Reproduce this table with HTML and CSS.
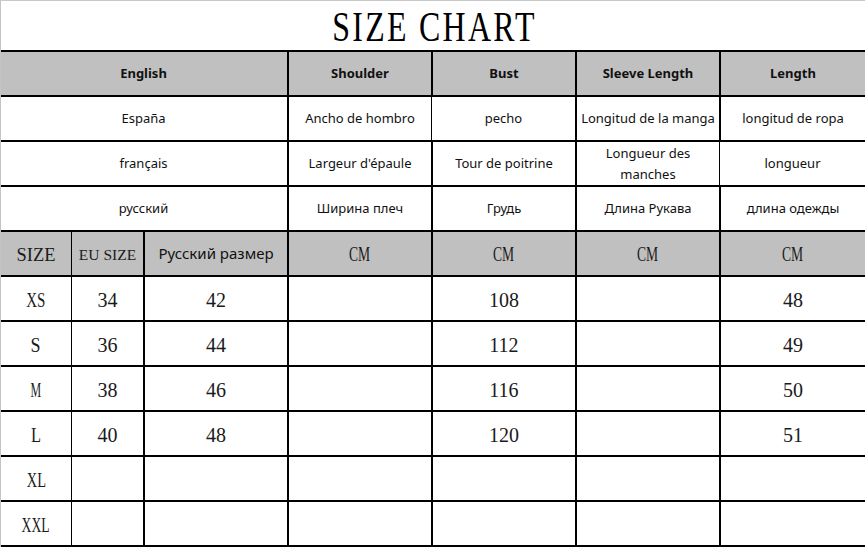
FILE: index.html
```html
<!DOCTYPE html>
<html>
<head>
<meta charset="utf-8">
<link rel="stylesheet" href="styles.css">
</head>
<body>
<div class="page">
  <div class="title"><span class="title-text">SIZE CHART</span></div>
  <div class="chart">
    <div class="cell head span3">English</div>
    <div class="cell head">Shoulder</div>
    <div class="cell head">Bust</div>
    <div class="cell head">Sleeve Length</div>
    <div class="cell head">Length</div>

    <div class="cell sans span3">España</div>
    <div class="cell sans">Ancho de hombro</div>
    <div class="cell sans">pecho</div>
    <div class="cell sans">Longitud de la manga</div>
    <div class="cell sans">longitud de ropa</div>

    <div class="cell sans span3">français</div>
    <div class="cell sans">Largeur d'épaule</div>
    <div class="cell sans">Tour de poitrine</div>
    <div class="cell sans">Longueur des<br>manches</div>
    <div class="cell sans">longueur</div>

    <div class="cell sans span3">русский</div>
    <div class="cell sans">Ширина плеч</div>
    <div class="cell sans">Грудь</div>
    <div class="cell sans">Длина Рукава</div>
    <div class="cell sans">длина одежды</div>

    <div class="cell gray serif"><span class="w-size">SIZE</span></div>
    <div class="cell gray serif small"><span class="w-eu">EU SIZE</span></div>
    <div class="cell gray sans big">Русский размер</div>
    <div class="cell gray serif"><span class="w-cm">CM</span></div>
    <div class="cell gray serif"><span class="w-cm">CM</span></div>
    <div class="cell gray serif"><span class="w-cm">CM</span></div>
    <div class="cell gray serif"><span class="w-cm">CM</span></div>

    <div class="cell serif"><span class="w-xs">XS</span></div>
    <div class="cell serif">34</div>
    <div class="cell serif">42</div>
    <div class="cell serif"></div>
    <div class="cell serif">108</div>
    <div class="cell serif"></div>
    <div class="cell serif">48</div>

    <div class="cell serif"><span class="w-s">S</span></div>
    <div class="cell serif">36</div>
    <div class="cell serif">44</div>
    <div class="cell serif"></div>
    <div class="cell serif">112</div>
    <div class="cell serif"></div>
    <div class="cell serif">49</div>

    <div class="cell serif"><span class="w-m">M</span></div>
    <div class="cell serif">38</div>
    <div class="cell serif">46</div>
    <div class="cell serif"></div>
    <div class="cell serif">116</div>
    <div class="cell serif"></div>
    <div class="cell serif">50</div>

    <div class="cell serif"><span class="w-l">L</span></div>
    <div class="cell serif">40</div>
    <div class="cell serif">48</div>
    <div class="cell serif"></div>
    <div class="cell serif">120</div>
    <div class="cell serif"></div>
    <div class="cell serif">51</div>

    <div class="cell serif"><span class="w-xl">XL</span></div>
    <div class="cell"></div>
    <div class="cell"></div>
    <div class="cell"></div>
    <div class="cell"></div>
    <div class="cell"></div>
    <div class="cell"></div>

    <div class="cell serif"><span class="w-xxl">XXL</span></div>
    <div class="cell"></div>
    <div class="cell"></div>
    <div class="cell"></div>
    <div class="cell"></div>
    <div class="cell"></div>
    <div class="cell"></div>
  </div>
</div>
</body>
</html>
```
FILE: styles.css
```css
html, body {
  margin: 0;
  padding: 0;
  background: #fff;
}

.page {
  width: 865px;
  height: 547px;
  box-sizing: border-box;
  border-top: 1px solid #c8c8c8;
  border-left: 1px solid #c4c4c4;
  overflow: hidden;
}

.title {
  height: 49px;
  box-sizing: border-box;
  padding-top: 4px;
  line-height: 45px;
  text-align: center;
  font-family: "Liberation Serif", serif;
  font-size: 42px;
  color: #000;
}

.title-text {
  display: inline-block;
  letter-spacing: 3px;
  transform: scaleX(0.76);
  margin-right: -3px;
}

.chart {
  display: grid;
  grid-template-columns: 70px 70px 142px 142px 142px 142px 1fr;
  grid-template-rows: repeat(11, 43px);
  gap: 2px;
  padding: 2px 0 2px 0;
  margin-left: -1px;
  padding-left: 1px;
  background: #000;
}

.chart > .cell:nth-child(7n+1),
.chart > .span3 {
  margin-left: -1px;
}

.cell {
  background: #fff;
  display: flex;
  align-items: center;
  justify-content: center;
  text-align: center;
  color: #111;
}

.span3 {
  grid-column: span 3;
}

.head {
  background: #c0c0c0;
  font-family: "Noto Sans", sans-serif;
  font-weight: 700;
  font-size: 13px;
  color: #111;
  padding-bottom: 1px;
}

.sans {
  font-family: "Noto Sans", sans-serif;
  font-size: 13px;
  line-height: 21px;
  color: #111;
}

.sans.big {
  font-size: 15px;
}

.gray {
  background: #c0c0c0;
}

.serif {
  font-family: "Liberation Serif", serif;
  font-size: 20px;
  color: #1a1a1a;
  padding-top: 3px;
}

.gray.serif {
  padding-top: 2px;
}

.serif.small {
  font-size: 15.5px;
}

.serif span {
  display: inline-block;
}

.w-size { transform: scaleX(0.97); font-size: 19px; }
.w-eu { transform: scaleX(1); }
.w-cm { transform: scaleX(0.68); }
.w-xs { transform: scaleX(0.75); }
.w-s { transform: scaleX(0.9); }
.w-m { transform: scaleX(0.6); }
.w-l { transform: scaleX(0.82); }
.w-xl { transform: scaleX(0.72); }
.w-xxl { transform: scaleX(0.68); }
```
